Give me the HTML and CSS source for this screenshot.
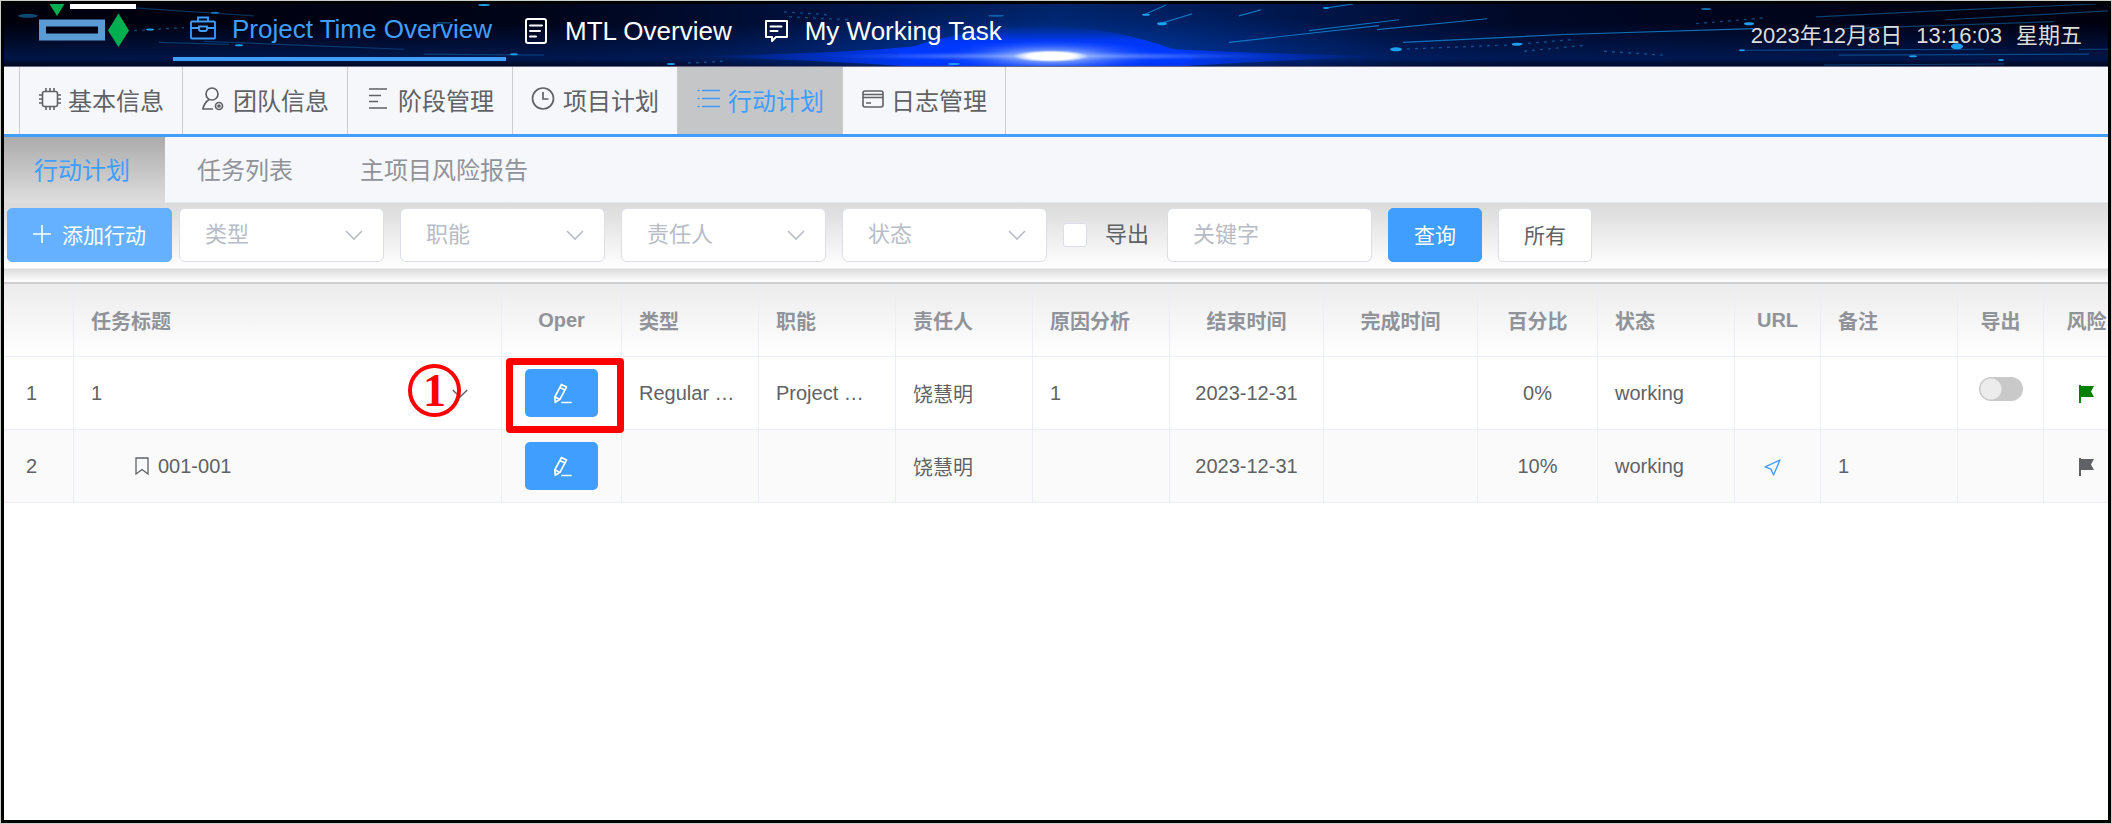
FILE: index.html
```html
<!DOCTYPE html>
<html lang="zh-CN">
<head>
<meta charset="utf-8">
<title>Project Time Overview</title>
<link rel="stylesheet" href="styles.css">
</head>
<body>
<svg class="sprite" aria-hidden="true">
  <symbol id="chevron" viewBox="0 0 20 12"><path d="M2 2l8 8 8-8" fill="none" stroke="currentColor" stroke-width="1.6"/></symbol>
  <symbol id="edit" viewBox="0 0 20 22"><path d="M9.5 2.5l5 2.6-6.6 12.2-4.6 3-.5-5.4zM8 5.5l5 2.6M3 14.8l4.8 2.6M10 20.5h9" fill="none" stroke="currentColor" stroke-width="1.7" stroke-linejoin="round" stroke-linecap="round"/></symbol>
  <symbol id="flag" viewBox="0 0 16 18"><path d="M0 0h2v1h13l-3 5.5 3 5.5H2v6H0z" fill="currentColor"/></symbol>
</svg>
<div class="frame">
  <header class="topbar">
    <svg class="sky" viewBox="0 0 2104 63" preserveAspectRatio="none" aria-hidden="true">
      <defs>
        <linearGradient id="base" x1="0" y1="0" x2="1" y2="0">
          <stop offset="0" stop-color="#00000c"/><stop offset=".25" stop-color="#000418"/><stop offset=".38" stop-color="#00103c"/><stop offset=".5" stop-color="#002368"/><stop offset=".6" stop-color="#001850"/><stop offset=".72" stop-color="#000826"/><stop offset="1" stop-color="#00000e"/>
        </linearGradient>
        <linearGradient id="floor" x1="0" y1="0" x2="0" y2="1">
          <stop offset=".3" stop-color="#002a80" stop-opacity="0"/><stop offset=".88" stop-color="#002a80" stop-opacity=".5"/><stop offset="1" stop-color="#001040" stop-opacity=".4"/>
        </linearGradient>
        <linearGradient id="lens" x1="0" y1="0" x2="1" y2="0">
          <stop offset="0" stop-color="#0036ff" stop-opacity="0"/><stop offset=".3" stop-color="#0038ff" stop-opacity=".9"/><stop offset=".5" stop-color="#0038ff"/><stop offset=".7" stop-color="#0038ff" stop-opacity=".9"/><stop offset="1" stop-color="#0036ff" stop-opacity="0"/>
        </linearGradient>
        <linearGradient id="rise" x1="0" y1="0" x2="0" y2="1">
          <stop offset="0" stop-color="#0030c0" stop-opacity=".1"/><stop offset=".4" stop-color="#0038ff" stop-opacity=".9"/><stop offset="1" stop-color="#0038ff"/>
        </linearGradient>
        <radialGradient id="halo"><stop offset="0" stop-color="#fff"/><stop offset=".3" stop-color="#9ab8ff" stop-opacity=".8"/><stop offset="1" stop-color="#1a50ff" stop-opacity="0"/></radialGradient>
        <radialGradient id="core"><stop offset=".6" stop-color="#fff"/><stop offset="1" stop-color="#fff" stop-opacity="0"/></radialGradient>
        <radialGradient id="aura"><stop offset="0" stop-color="#0048c8" stop-opacity=".7"/><stop offset="1" stop-color="#003090" stop-opacity="0"/></radialGradient>
      </defs>
      <rect width="2104" height="63" fill="url(#base)"/>
      <rect width="2104" height="63" fill="url(#floor)"/>
      <ellipse cx="1047" cy="50" rx="360" ry="48" fill="url(#aura)"/>
      <path d="M690 53Q840 50 900 44 980 38 1047 40 1110 38 1170 46 1240 50 1380 53 1240 59 1180 63H900Q830 58 690 53z" fill="url(#lens)"/>
      <path d="M900 46Q970 22 1047 22 1110 24 1170 46 1200 54 1180 60H920Q880 54 900 46z" fill="url(#rise)"/>
      <ellipse cx="1047" cy="53" rx="240" ry="5" fill="url(#halo)" opacity=".7"/>
      <ellipse cx="1047" cy="53" rx="110" ry="17" fill="url(#halo)"/>
      <ellipse cx="1047" cy="53" rx="38" ry="6" fill="url(#core)"/>
      <g fill="none" stroke="#1287d8" stroke-width="1.2">
        <path d="M1140 11l22-10M1156 20l32-10M1225 39l70-8 80-9M1235 12l22-6M1305 27l90-11M1373 26l110-11M1399 39l160-8 190-6M1323 4l26-4" opacity=".8"/>
        <path d="M1812 13l120-6 160-7M1942 16l162-9M1820 62l180-1M2075 46h29M1740 47l240-1M1835 52l250-1M1840 25l210-7" opacity=".45"/>
        <path d="M200 38l100 4 100 4M420 51l120 1M130 4l120 8M155 39l70 2" opacity=".35"/>
      </g>
      <g fill="none" stroke="#1287d8" stroke-width="1.4" stroke-dasharray="3 5" opacity=".5">
        <path d="M780 8l45 3M785 13l60 3M1395 46l100-4M1500 42l70-6M1520 48l60-6M1692 20l70-6M130 27l50-3M684 60l40-2M1600 48l60 4"/>
      </g>
      <g fill="#1ea0f0">
        <ellipse cx="24" cy="12" rx="10" ry="2" opacity=".45"/><ellipse cx="146" cy="26" rx="4" ry="1"/><ellipse cx="211" cy="9" rx="4" ry="1" opacity=".7"/><ellipse cx="235" cy="42" rx="4" ry="1"/><ellipse cx="480" cy="1" rx="6" ry="1"/><ellipse cx="510" cy="51" rx="4" ry="1"/><ellipse cx="667" cy="61" rx="4" ry="1"/><ellipse cx="1142" cy="11" rx="4" ry="1"/><ellipse cx="1158" cy="20" rx="5" ry="1.5"/><ellipse cx="1392" cy="46" rx="6" ry="2"/><ellipse cx="1513" cy="41" rx="5" ry="1.5"/><ellipse cx="1702" cy="5" rx="5" ry="1" opacity=".7"/><ellipse cx="1745" cy="20" rx="5" ry="1.5"/><ellipse cx="1953" cy="43" rx="6" ry="3"/><ellipse cx="1909" cy="53" rx="4" ry="1"/><ellipse cx="1997" cy="57" rx="3" ry="1"/><ellipse cx="1738" cy="47" rx="3" ry="1"/><ellipse cx="1322" cy="4" rx="3" ry="1"/><ellipse cx="950" cy="61" rx="6" ry="1"/><ellipse cx="992" cy="12" rx="8" ry="1" opacity=".5"/><ellipse cx="440" cy="19" rx="8" ry="1" opacity=".4"/>
      </g>
    </svg>
    <svg class="logo" viewBox="0 0 94 44" aria-label="Logo">
      <path d="M10.500 0h15L18 12z" fill="#00b050"/>
      <path d="M31 0h66v5H31z" fill="#fff"/>
      <path d="M3.500 19h59v14h-59z" fill="#000010" stroke="#5b9bd5" stroke-width="7"/>
      <path d="M79.500 9.500l10.500 17L79.500 43 69 26.500z" fill="#00b050"/>
    </svg>
    <nav class="mainnav">
      <a class="mainlink current" href="#">
        <svg class="navicon" viewBox="0 0 26 26"><g fill="none" stroke="currentColor" stroke-width="1.8"><rect x="1" y="5.500" width="24" height="17" rx="1"/><path d="M8 5V1.500h10V5M1 12h8M17 12h8M9 10.500h8v2.500q0 2-2 2h-4q-2 0-2-2z"/></g></svg>
        Project Time Overview</a>
      <a class="mainlink" href="#">
        <svg class="navicon" viewBox="0 0 26 26"><g fill="none" stroke="currentColor" stroke-width="2"><rect x="3" y="1" width="20" height="24" rx="2"/><path d="M7 7.500h12M7 13h10M7 18.500h6" stroke-linecap="round"/></g></svg>
        MTL Overview</a>
      <a class="mainlink" href="#">
        <svg class="navicon" viewBox="0 0 26 26"><g fill="none" stroke="currentColor" stroke-width="2"><path d="M3 3h21v16H13l-4 4v-4H3z" stroke-linejoin="round"/><path d="M7.500 8.500h11M7.500 13h7" stroke-linecap="round"/></g></svg>
        My Working Task</a>
    </nav>
    <div class="clock"><span>2023年12月8日</span><span>13:16:03</span><span>星期五</span></div>
  </header>

  <nav class="tabs">
    <a class="tab slim" href="#"><svg class="tabicon" viewBox="0 0 24 24"><g fill="none" stroke="currentColor" stroke-width="1.6"><rect x="4.500" y="4.500" width="15" height="15" rx="2"/><path d="M8 4.500V1M12 4.500V1M16 4.500V1M8 19.500v3.500M12 19.500v3.500M16 19.500v3.500M4.500 8H1M4.500 12H1M4.500 16H1M19.500 8h3.500M19.500 12h3.500M19.500 16h3.500"/></g></svg>基本信息</a>
    <a class="tab" href="#"><svg class="tabicon" viewBox="0 0 24 24"><g fill="none" stroke="currentColor" stroke-width="1.7"><circle cx="11" cy="7" r="6"/><path d="M8 12.500Q3 16 2 22h10"/><circle cx="18" cy="19" r="3.500"/><circle cx="18" cy="19" r="1"/></g></svg>团队信息</a>
    <a class="tab" href="#"><svg class="tabicon" viewBox="0 0 24 24"><path d="M3 2h18M3 8.500h12M3 14.500h9M3 21h18" fill="none" stroke="currentColor" stroke-width="1.7"/></svg>阶段管理</a>
    <a class="tab" href="#"><svg class="tabicon" viewBox="0 0 24 24"><g fill="none" stroke="currentColor" stroke-width="1.7"><circle cx="12" cy="11.500" r="10.500"/><path d="M12 5V12h5.500"/></g></svg>项目计划</a>
    <a class="tab chosen" href="#"><svg class="tabicon" viewBox="0 0 24 24"><path d="M6 3.500h18M6 11.500h18M6 19.500h18M1.500 3.500h2M1.500 11.500h2M1.500 19.500h2" fill="none" stroke="currentColor" stroke-width="1.700"/></svg>行动计划</a>
    <a class="tab slim" href="#"><svg class="tabicon" viewBox="0 0 24 24"><g fill="none" stroke="currentColor" stroke-width="1.6"><rect x="2" y="4" width="20" height="16" rx="2"/><path d="M2 7.500h20M2 10.500h20M5 16h5"/></g></svg>日志管理</a>
  </nav>

  <nav class="subtabs">
    <a class="subtab chosen" href="#">行动计划</a>
    <a class="subtab" href="#">任务列表</a>
    <a class="subtab" href="#">主项目风险报告</a>
  </nav>

  <form class="filters">
    <button class="btn add" type="button"><svg class="plus" viewBox="0 0 18 18" aria-hidden="true"><path d="M9 0v18M0 9h18" stroke="currentColor" stroke-width="1.6"/></svg>添加行动</button>
    <div class="fields">
      <span class="picker"><select class="field" aria-label="类型"><option>类型</option></select><svg class="arrow"><use href="#chevron"/></svg></span>
      <span class="picker"><select class="field" aria-label="职能"><option>职能</option></select><svg class="arrow"><use href="#chevron"/></svg></span>
      <span class="picker"><select class="field" aria-label="责任人"><option>责任人</option></select><svg class="arrow"><use href="#chevron"/></svg></span>
      <span class="picker"><select class="field" aria-label="状态"><option>状态</option></select><svg class="arrow"><use href="#chevron"/></svg></span>
      <label class="check"><input class="tick" type="checkbox">导出</label>
      <input class="field" type="text" placeholder="关键字" aria-label="关键字">
      <button class="btn primary" type="button">查询</button>
      <button class="btn plain" type="button">所有</button>
    </div>
  </form>

  <main class="sheet">
    <table class="grid">
      <colgroup><col class="w70"><col><col class="w120"><col class="w137"><col class="w137"><col class="w137"><col class="w137"><col class="w154"><col class="w154"><col class="w120"><col class="w137"><col class="w86"><col class="w137"><col class="w86"><col class="w86"></colgroup>
      <thead>
        <tr><th></th><th>任务标题</th><th class="mid">Oper</th><th>类型</th><th>职能</th><th>责任人</th><th>原因分析</th><th class="mid">结束时间</th><th class="mid">完成时间</th><th class="mid">百分比</th><th>状态</th><th class="mid">URL</th><th>备注</th><th class="mid">导出</th><th class="mid">风险</th></tr>
      </thead>
      <tbody>
        <tr>
          <td class="num">1</td>
          <td class="title">1<svg class="fold"><use href="#chevron"/></svg><span class="step">1</span></td>
          <td class="oper marked"><button class="edit" type="button" aria-label="编辑"><svg class="pencil"><use href="#edit"/></svg></button></td>
          <td>Regular …</td><td>Project …</td><td>饶慧明</td><td>1</td>
          <td class="mid">2023-12-31</td><td></td><td class="mid">0%</td><td>working</td><td></td><td></td>
          <td class="mid"><input class="switch" type="checkbox" role="switch" aria-label="导出"></td>
          <td class="mid"><svg class="flag green"><use href="#flag"/></svg></td>
        </tr>
        <tr>
          <td class="num">2</td>
          <td class="child"><svg class="mark" viewBox="0 0 14 18" aria-hidden="true"><path d="M1 1h12v16l-6-4.500L1 17z" fill="none" stroke="currentColor" stroke-width="1.300"/></svg>001-001</td>
          <td class="oper"><button class="edit" type="button" aria-label="编辑"><svg class="pencil"><use href="#edit"/></svg></button></td>
          <td></td><td></td><td>饶慧明</td><td></td>
          <td class="mid">2023-12-31</td><td></td><td class="mid">10%</td><td>working</td>
          <td class="mid link"><a href="#" aria-label="URL"><svg class="plane" viewBox="0 0 16 16"><path d="M15 1L1 7.500l5.500 2L9 15z" fill="none" stroke="currentColor" stroke-width="1.300" stroke-linejoin="round"/></svg></a></td>
          <td>1</td><td></td>
          <td class="mid"><svg class="flag"><use href="#flag"/></svg></td>
        </tr>
      </tbody>
    </table>
  </main>
</div>
</body>
</html>
```
FILE: styles.css
```css
*,
*::after {
  box-sizing: border-box;
}

body {
  margin: 0;
  padding: 1px;
  background: #c8cec8;
  color: #606266;
  font-family: "Liberation Sans", "Noto Sans CJK SC", sans-serif;
  font-size: 20px;
}

a {
  color: inherit;
  text-decoration: none;
}

button,
input,
select {
  font: inherit;
  margin: 0;
}

.sprite {
  display: none;
}

.frame {
  min-height: calc(100vh - 2px);
  border: 3px solid #000;
  background: #fff;
  overflow: hidden;
}

/* Top bar */
.topbar {
  position: relative;
  display: flex;
  height: 63px;
  border-bottom: 1px solid #6a6a88;
  background: #00000c;
}

.sky {
  position: absolute;
  inset: 0;
  width: 100%;
  height: 100%;
}

.logo {
  position: relative;
  flex: none;
  width: 94px;
  height: 44px;
  margin: 0 40px 0 35px;
  overflow: visible;
}

.mainnav {
  position: relative;
  display: flex;
  flex: 1;
  align-items: flex-start;
}

.mainlink {
  display: flex;
  align-items: center;
  gap: 16px;
  height: 57px;
  padding: 0 14px 3px 17px;
  color: #fff;
  font-size: 26px;
  white-space: nowrap;
}

.mainlink.current {
  border-bottom: 4px solid #409eff;
  color: #409eff;
}

.navicon {
  width: 26px;
  height: 26px;
}

.clock {
  position: relative;
  display: flex;
  align-items: baseline;
  gap: 14px;
  padding: 16px 26px 0 0;
  color: #ddd;
  font-size: 22px;
  line-height: 32px;
}

/* Project tabs */
.tabs {
  display: flex;
  height: 70px;
  padding-left: 15px;
  border-bottom: 3px solid #409eff;
  background: #f5f7fa;
}

.tab {
  display: flex;
  align-items: center;
  gap: 8px;
  padding: 0 18px 3px;
  border-right: 1px solid #ccc;
  font-size: 24px;
}

.tab:first-child {
  border-left: 1px solid #ccc;
}

.tab.slim {
  gap: 6px;
}

.tab.chosen {
  background: #c5c6c8;
  color: #409eff;
}

.tabicon {
  width: 24px;
  height: 24px;
}

.subtabs {
  display: flex;
  gap: 2px;
  height: 66px;
  border-bottom: 1px solid #e4e7ed;
  background: #f5f7fa;
  color: #909399;
  font-size: 24px;
}

.subtab {
  display: flex;
  align-items: center;
  padding: 0 35px 3px 30px;
}

.subtab.chosen {
  margin-bottom: -1px;
  background: linear-gradient(#ababab, #dedede);
  color: #409eff;
}

/* Filter row */
.filters {
  display: flex;
  align-items: center;
  gap: 7px;
  height: 66px;
  padding: 0 3px 2px;
  border-bottom: 1px solid #eee;
  background: linear-gradient(#dadada, #fff);
}

.fields {
  display: flex;
  align-items: center;
  gap: 16px;
}

.picker {
  position: relative;
  display: flex;
}

.field {
  width: 205px;
  height: 54px;
  padding: 0 25px;
  border: 1px solid #dcdfe6;
  border-radius: 6px;
  background: #fff;
  color: #b8bcc6;
  font-size: 22px;
  appearance: none;
}

.field::placeholder {
  color: #b8bcc6;
}

.arrow {
  position: absolute;
  top: 21px;
  right: 20px;
  width: 20px;
  height: 12px;
  color: #b8bcc6;
  pointer-events: none;
}

.check {
  display: flex;
  align-items: center;
  gap: 18px;
  padding-right: 2px;
  font-size: 22px;
  line-height: 24px;
}

.tick {
  width: 24px;
  height: 24px;
  border: 1px solid #dcdfe6;
  border-radius: 3px;
  background: #fff;
  appearance: none;
}

.btn {
  display: flex;
  align-items: center;
  justify-content: center;
  height: 54px;
  padding: 0 25px 2px;
  border: 1px solid #409eff;
  border-radius: 5px;
  background: #409eff;
  color: #fff;
  font-size: 21px;
  white-space: nowrap;
}

.btn.add {
  gap: 11px;
  border-color: #66b1ff;
  background: #66b1ff;
}

.btn.plain {
  border-color: #dcdfe6;
  background: #fff;
  color: #606266;
}

.plus {
  width: 18px;
  height: 18px;
}

/* Action table */
.sheet {
  padding-top: 13px;
  background: linear-gradient(#dcdcdc, #fff 13px);
  overflow: hidden;
}

.grid {
  width: calc(100% + 22px);
  border-top: 2px solid #cdced0;
  border-spacing: 0;
  table-layout: fixed;
}

.w70 { width: 70px; }
.w86 { width: 86px; }
.w120 { width: 120px; }
.w137 { width: 137px; }
.w154 { width: 154px; }

th,
td {
  height: 73px;
  padding: 0 17px;
  border-right: 1px solid #ebeef5;
  border-bottom: 1px solid #ebeef5;
  overflow: hidden;
  text-align: left;
  text-overflow: ellipsis;
  white-space: nowrap;
}

th {
  color: #909399;
  font-weight: 700;
}

thead {
  background: linear-gradient(#ececec, #fff);
}

tbody tr:nth-child(2) {
  background: #fafafa;
}

.mid,
.oper {
  text-align: center;
}

.num {
  padding: 0 22px;
}

.title,
.marked {
  position: relative;
  overflow: visible;
}

.fold {
  position: absolute;
  top: 31px;
  right: 32px;
  width: 18px;
  height: 11px;
}

.step {
  position: absolute;
  top: 7px;
  right: 40px;
  display: grid;
  place-items: center;
  width: 53px;
  height: 53px;
  border: 4px solid #f00;
  border-radius: 50%;
  color: #f00;
  font: 700 46px/46px "Liberation Serif", serif;
}

.marked::after {
  content: "";
  position: absolute;
  top: 1px;
  left: 4px;
  width: 118px;
  height: 75px;
  border: 7px solid #f00;
  border-radius: 4px;
  pointer-events: none;
}

.child {
  padding-left: 61px;
}

.mark {
  width: 14px;
  height: 18px;
  margin-right: 9px;
  vertical-align: -2px;
}

.edit {
  display: inline-flex;
  align-items: center;
  justify-content: center;
  width: 73px;
  height: 48px;
  border: 0;
  border-radius: 5px;
  background: #409eff;
  color: #fff;
  vertical-align: middle;
}

.pencil {
  width: 20px;
  height: 22px;
}

.switch {
  display: block;
  width: 44px;
  height: 24px;
  margin: 0 auto 8px;
  border-radius: 12px;
  background: radial-gradient(circle at 12px 12px, #ececec 10px, #c9c9c9 11px);
  appearance: none;
}

.flag {
  width: 16px;
  height: 18px;
  vertical-align: middle;
}

.green {
  color: #008000;
}

.link {
  padding-right: 27px;
  color: #409eff;
}

.plane {
  width: 17px;
  height: 17px;
  vertical-align: middle;
}
```
